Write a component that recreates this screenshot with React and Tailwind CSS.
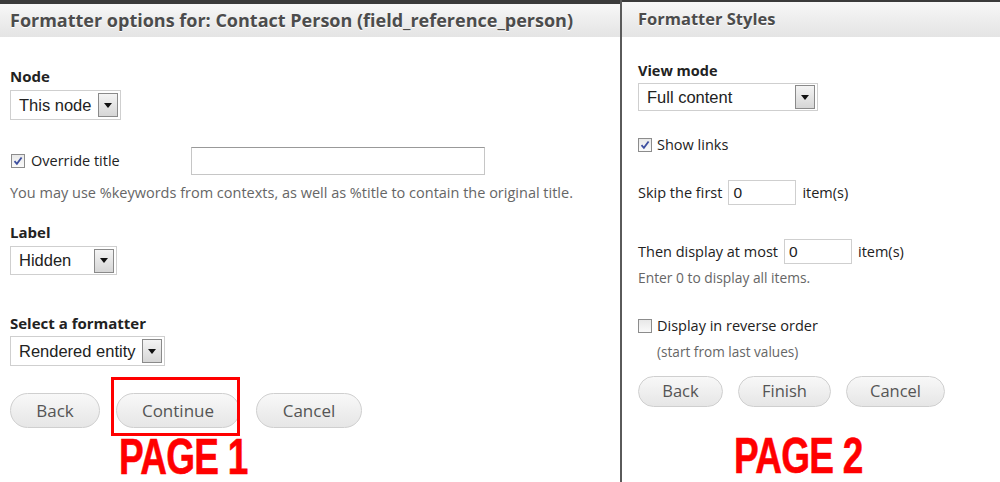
import React from 'react';

const Arrow = () => (
  <span className="flex h-[24px] w-[20px] items-center justify-center border border-[#8a8a8a] bg-gradient-to-b from-[#f4f4f4] to-[#d6d6d6]">
    <svg width="8" height="5" viewBox="0 0 8 5">
      <path d="M0 0h8L4 5z" fill="#111" />
    </svg>
  </span>
);

function Select({ value, width, h = 'h-[30px]', className = '' }) {
  return (
    <div
      className={`flex ${h} items-center justify-between border border-[#cfcfcf] bg-white pl-[8px] pr-[2px] font-['Liberation_Sans',Arial,sans-serif] text-[16.5px] text-[#222] ${className}`}
      style={{ width }}
    >
      <span>{value}</span>
      <Arrow />
    </div>
  );
}

function Check({ checked }) {
  return (
    <span className="flex h-[14px] w-[14px] shrink-0 items-center justify-center border border-[#8c8c8c] bg-gradient-to-b from-[#e8e8e8] to-[#fafafa]">
      {checked && (
        <svg width="10" height="10" viewBox="0 0 10 10">
          <path d="M1.5 5.2l2.4 2.6L8.6 1.5" fill="none" stroke="#3d4f9f" strokeWidth="1.8" />
        </svg>
      )}
    </span>
  );
}

function Pill({ children, width, h = 'h-[35px]', text = 'text-[17px]' }) {
  return (
    <div
      className={`flex ${h} items-center justify-center rounded-full border border-[#cfcfcf] bg-gradient-to-b from-[#f8f8f8] to-[#e6e6e6] ${text} text-[#555]`}
      style={{ width }}
    >
      {children}
    </div>
  );
}

function Header({ children, size }) {
  return (
    <div
      className={`flex h-[33px] items-center bg-gradient-to-b from-[#f7f7f7] to-[#e4e4e4] font-bold text-[#4c4c4c] [text-shadow:0_1px_0_#fff] ${size}`}
    >
      {children}
    </div>
  );
}

function PageMark({ children, className }) {
  return (
    <div className={`h-[40px] ${className}`}>
      <span className="inline-block origin-left scale-x-[0.74] font-['Liberation_Sans',Arial,sans-serif] text-[50px] font-bold leading-[38px] tracking-[-1px] whitespace-nowrap text-[#ff0000] [-webkit-text-stroke:0.6px_#ff0000]">
        {children}
      </span>
    </div>
  );
}

export default function App() {
  return (
    <div className="flex h-[482px] w-[1000px] overflow-hidden bg-white font-['Open_Sans',sans-serif] text-[#222]">
      {/* Page 1 */}
      <div className="flex w-[620px] flex-col">
        <div className="h-[4px] bg-[#3a3a3a]" />
        <Header size="text-[18px] px-[10px]">Formatter options for: Contact Person (field_reference_person)</Header>
        <div className="flex flex-col px-[10px] pt-[29px] text-[14.5px]">
          <div className="text-[15px] font-bold leading-[20px]">Node</div>
          <Select value="This node" width={111} className="mt-[4px]" />
          <div className="mt-[27px] flex h-[28px] items-center">
            <div className="flex w-[181px] items-center gap-[6px] pl-[1px]">
              <Check checked />
              <span>Override title</span>
            </div>
            <div className="h-[28px] w-[294px] border border-[#c6c6c6] border-t-[#999]" />
          </div>
          <div className="mt-[8px] leading-[20px] text-[#666]">
            You may use %keywords from contexts, as well as %title to contain the original title.
          </div>
          <div className="mt-[19px] text-[15px] font-bold leading-[20px]">Label</div>
          <Select value="Hidden" width={107} h="h-[29px]" className="mt-[4px]" />
          <div className="mt-[38px] text-[15px] font-bold leading-[20px]">Select a formatter</div>
          <Select value="Rendered entity" width={155} className="mt-[3px]" />
          <div className="mt-[27px] flex items-center">
            <Pill width={90}>Back</Pill>
            <div className="relative ml-[16px]">
              <Pill width={124}>Continue</Pill>
              <div className="absolute left-[-5px] top-[-16px] h-[59px] w-[129px] border-[3px] border-[#ff0000]" />
            </div>
            <div className="ml-[16px]">
              <Pill width={106}>Cancel</Pill>
            </div>
          </div>
          <PageMark className="ml-[109px] mt-[10px]">PAGE 1</PageMark>
        </div>
      </div>

      <div className="w-[2px] bg-[#5a5a5a]" />

      {/* Page 2 */}
      <div className="flex flex-1 flex-col">
        <div className="h-[2px] bg-[#3a3a3a]" />
        <Header size="text-[16.5px] px-[16px] h-[35px]">Formatter Styles</Header>
        <div className="flex flex-col pl-[16px] pt-[25px] text-[14.5px]">
          <div className="font-bold leading-[18px]">View mode</div>
          <Select value="Full content" width={180} h="h-[28px]" className="mt-[3px] text-[15.5px]" />
          <div className="mt-[24px] flex h-[20px] items-center gap-[5px]">
            <Check checked />
            <span>Show links</span>
          </div>
          <div className="mt-[25px] flex items-center gap-[6px]">
            <span>Skip the first</span>
            <div className="flex h-[25px] w-[68px] items-center border border-[#cfcfcf] pl-[4px] font-['Liberation_Sans',Arial,sans-serif] text-[15.5px]">0</div>
            <span>item(s)</span>
          </div>
          <div className="mt-[34px] flex items-center gap-[6px]">
            <span>Then display at most</span>
            <div className="flex h-[25px] w-[68px] items-center border border-[#cfcfcf] pl-[4px] font-['Liberation_Sans',Arial,sans-serif] text-[15.5px]">0</div>
            <span>item(s)</span>
          </div>
          <div className="mt-[5px] text-[13.8px] leading-[18px] text-[#666]">Enter 0 to display all items.</div>
          <div className="mt-[29px] flex h-[20px] items-center gap-[5px]">
            <Check />
            <span>Display in reverse order</span>
          </div>
          <div className="mt-[7px] pl-[19px] text-[13.6px] leading-[18px] text-[#666]">(start from last values)</div>
          <div className="mt-[15px] flex gap-[15px]">
            <Pill width={85} h="h-[31px]" text="text-[16.5px]">Back</Pill>
            <Pill width={93} h="h-[31px]" text="text-[16.5px]">Finish</Pill>
            <Pill width={99} h="h-[31px]" text="text-[16.5px]">Cancel</Pill>
          </div>
          <PageMark className="ml-[96px] mt-[30px]">PAGE 2</PageMark>
        </div>
      </div>
    </div>
  );
}
